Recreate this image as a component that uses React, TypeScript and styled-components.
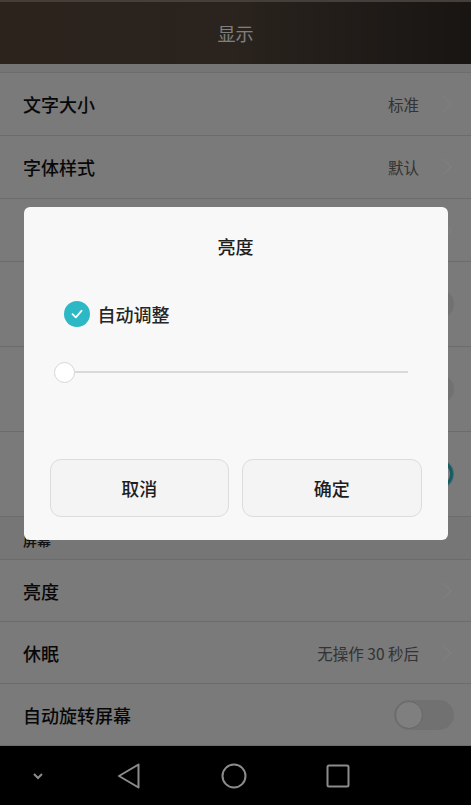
import React, { FC } from "react"
import styled, { createGlobalStyle } from "styled-components"

const GlobalStyle = createGlobalStyle`
html, body {
    margin: 0;
    padding: 0;
    background: #000;
}
body {
    font-family: "Noto Sans CJK SC", "Noto Sans", sans-serif;
}
* {
    box-sizing: border-box;
}
`

const TEAL = "#2db8c5"

const Screen = styled.div`
    position: relative;
    width: 471px;
    height: 805px;
    display: flex;
    flex-direction: column;
    overflow: hidden;
    background: #f4f4f4;
`

const Header = styled.header`
    height: 64px;
    flex-shrink: 0;
    display: flex;
    align-items: center;
    justify-content: center;
    border-top: 2px solid #8a7d72;
    background: linear-gradient(90deg, #584639 0%, #54473c 50%, #302a26 100%);
`

const HeaderTitle = styled.h1`
    margin: 0;
    font-size: 18px;
    font-weight: 400;
    color: #ffffff;
`

const Content = styled.main`
    flex: 1;
    overflow: hidden;
`

const SectionGap = styled.div`
    height: 9px;
    background: #ebebeb;
    border-bottom: 1px solid #dadada;
`

const SectionHeader = styled.div`
    height: 43px;
    display: flex;
    align-items: flex-end;
    padding: 0 23px 9px;
    background: #ececec;
    border-bottom: 1px solid #d8d8d8;
    font-size: 14px;
    font-weight: 500;
    color: #222;
`

const Row = styled.div<{ $h: number }>`
    height: ${p => p.$h}px;
    display: flex;
    align-items: center;
    padding: 0 17px 0 23px;
    border-bottom: 1px solid #d8d8d8;
`

const RowLabel = styled.span`
    flex: 1;
    font-size: 18px;
    font-weight: 500;
    color: #111;
`

const RowValue = styled.span`
    font-size: 15.5px;
    font-weight: 400;
    color: #666;
    margin-right: 21px;
`

const ChevronIcon = styled.svg`
    width: 14px;
    height: 18px;
    flex-shrink: 0;
`

const ToggleTrack = styled.div<{ $on?: boolean }>`
    width: 60px;
    height: 30px;
    border-radius: 15px;
    display: flex;
    align-items: center;
    justify-content: ${p => (p.$on ? "flex-end" : "flex-start")};
    padding: 1px;
    background: ${p => (p.$on ? "#9ad9df" : "#e2e2e2")};
`

const ToggleKnob = styled.div<{ $on?: boolean }>`
    width: 28px;
    height: 28px;
    border-radius: 50%;
    background: #fefefe;
    border: ${p => (p.$on ? `3px solid ${TEAL}` : "1px solid #cfcfcf")};
`

const NavBar = styled.nav`
    height: 59px;
    flex-shrink: 0;
    display: grid;
    grid-template-columns: 76px 106px 104px 104px 1fr;
    align-items: center;
    background: #000;
`

const NavButton = styled.div`
    display: flex;
    justify-content: center;
    align-items: center;
`

const Scrim = styled.div`
    position: absolute;
    top: 0;
    left: 0;
    right: 0;
    bottom: 59px;
    background: rgba(0, 0, 0, 0.5);
    display: flex;
    align-items: center;
    justify-content: center;
`

const Dialog = styled.div`
    width: 424px;
    display: flex;
    flex-direction: column;
    padding: 26px 26px 23px;
    background: #f8f8f8;
    border-radius: 6px;
`

const DialogTitle = styled.h2`
    margin: 0;
    height: 26px;
    line-height: 26px;
    text-align: center;
    font-size: 18px;
    font-weight: 500;
    color: #1e1e1e;
`

const CheckRow = styled.label`
    margin: 42px 0 0 14px;
    height: 26px;
    display: flex;
    align-items: center;
    gap: 8px;
`

const CheckCircle = styled.span`
    width: 26px;
    height: 26px;
    border-radius: 50%;
    background: ${TEAL};
    display: flex;
    align-items: center;
    justify-content: center;
`

const CheckLabel = styled.span`
    font-size: 18px;
    font-weight: 500;
    color: #262626;
`

const Slider = styled.div`
    margin: 35px 14px 0 4px;
    height: 21px;
    display: flex;
    align-items: center;
`

const SliderThumb = styled.div`
    width: 21px;
    height: 21px;
    flex-shrink: 0;
    border-radius: 50%;
    background: #fff;
    border: 1px solid #d6d6d6;
`

const SliderLine = styled.div`
    flex: 1;
    height: 2px;
    background: #d9d9d9;
`

const ButtonRow = styled.div`
    margin-top: 76px;
    display: grid;
    grid-template-columns: 1fr 1fr;
    gap: 13px;
`

const DialogButton = styled.button`
    height: 58px;
    border: 1px solid #dcdcdc;
    border-radius: 11px;
    background: #f4f4f4;
    font-family: inherit;
    font-size: 18px;
    font-weight: 500;
    color: #1e1e1e;
    padding: 0;
`

const Chevron: FC = () => (
    <ChevronIcon viewBox="0 0 14 18">
        <path d="M3 1 L11 9 L3 17" fill="none" stroke="#ffffff" strokeWidth="1.4" />
    </ChevronIcon>
)

const Toggle: FC<{ on?: boolean }> = ({ on }) => (
    <ToggleTrack $on={on}>
        <ToggleKnob $on={on} />
    </ToggleTrack>
)

const NAV_STROKE = "#8c8c8c"

const App: FC = () => (
    <>
        <GlobalStyle />
        <Screen>
            <Header>
                <HeaderTitle>显示</HeaderTitle>
            </Header>
            <Content>
                <SectionGap />
                <Row $h={63}>
                    <RowLabel>文字大小</RowLabel>
                    <RowValue>标准</RowValue>
                    <Chevron />
                </Row>
                <Row $h={63}>
                    <RowLabel>字体样式</RowLabel>
                    <RowValue>默认</RowValue>
                    <Chevron />
                </Row>
                {/* rows hidden behind the dialog: only their right edge shows */}
                <Row $h={63}>
                    <RowLabel />
                    <Chevron />
                </Row>
                <Row $h={85}>
                    <RowLabel />
                    <Toggle />
                </Row>
                <Row $h={85}>
                    <RowLabel />
                    <Toggle />
                </Row>
                <Row $h={85}>
                    <RowLabel />
                    <Toggle on />
                </Row>
                <SectionHeader>屏幕</SectionHeader>
                <Row $h={62}>
                    <RowLabel>亮度</RowLabel>
                    <Chevron />
                </Row>
                <Row $h={62}>
                    <RowLabel>休眠</RowLabel>
                    <RowValue>无操作 30 秒后</RowValue>
                    <Chevron />
                </Row>
                <Row $h={62}>
                    <RowLabel>自动旋转屏幕</RowLabel>
                    <Toggle />
                </Row>
            </Content>
            <NavBar>
                <NavButton>
                    <svg width="12" height="8" viewBox="0 0 12 8">
                        <path d="M2 2 L6 6 L10 2" fill="none" stroke={NAV_STROKE} strokeWidth="2" />
                    </svg>
                </NavButton>
                <NavButton>
                    <svg width="24" height="26" viewBox="0 0 24 26">
                        <path d="M21.5 1.5 L2 13 L21.5 24.5 Z" fill="none" stroke={NAV_STROKE} strokeWidth="2" strokeLinejoin="round" />
                    </svg>
                </NavButton>
                <NavButton>
                    <svg width="26" height="26" viewBox="0 0 26 26">
                        <circle cx="13" cy="13" r="11.5" fill="none" stroke={NAV_STROKE} strokeWidth="2" />
                    </svg>
                </NavButton>
                <NavButton>
                    <svg width="24" height="24" viewBox="0 0 24 24">
                        <rect x="1.5" y="1.5" width="21" height="21" rx="1.5" fill="none" stroke={NAV_STROKE} strokeWidth="2" />
                    </svg>
                </NavButton>
                <div />
            </NavBar>
            <Scrim>
                <Dialog>
                    <DialogTitle>亮度</DialogTitle>
                    <CheckRow>
                        <CheckCircle>
                            <svg width="14" height="14" viewBox="0 0 14 14">
                                <path d="M2.5 7.2 L5.8 10.3 L11.5 3.8" fill="none" stroke="#fff" strokeWidth="1.8" strokeLinecap="round" strokeLinejoin="round" />
                            </svg>
                        </CheckCircle>
                        <CheckLabel>自动调整</CheckLabel>
                    </CheckRow>
                    <Slider>
                        <SliderThumb />
                        <SliderLine />
                    </Slider>
                    <ButtonRow>
                        <DialogButton>取消</DialogButton>
                        <DialogButton>确定</DialogButton>
                    </ButtonRow>
                </Dialog>
            </Scrim>
        </Screen>
    </>
)

export default App
